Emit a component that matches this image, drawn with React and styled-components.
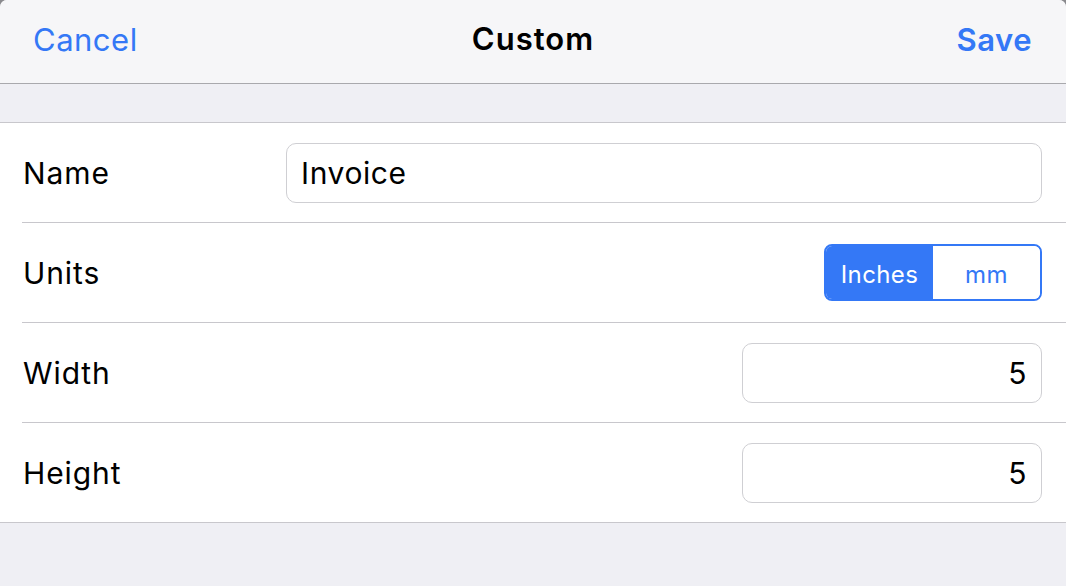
import * as React from 'react';
import styled, { createGlobalStyle } from 'styled-components';

const GlobalStyle = createGlobalStyle`
    html, body {
        margin: 0;
        padding: 0;
        background: #8a8a8e;
    }
    * { box-sizing: border-box; }
`

const Sheet = styled.div`
    width: 1066px;
    height: 586px;
    background: #efeff4;
    border-radius: 7px 7px 0 0;
    overflow: hidden;
    font-family: Inter, "Liberation Sans", sans-serif;
    display: flex;
    flex-direction: column;
`

const NavBar = styled.div`
    height: 84px;
    flex: none;
    background: #f6f6f8;
    border-bottom: 1px solid #a9a9ad;
    display: flex;
    align-items: center;
    justify-content: space-between;
    padding: 0 34px 5px 33px;
    position: relative;
`

const NavButton = styled.div`
    color: #3478f6;
    font-size: 31px;
    font-weight: ${p => p.bold ? 600 : 400};
    letter-spacing: 0.5px;
`

const Title = styled.div`
    position: absolute;
    left: 0;
    right: 0;
    text-align: center;
    font-size: 31px;
    font-weight: 600;
    letter-spacing: 1px;
    color: #000;
    pointer-events: none;
    padding-bottom: 1px;
`

const Spacer = styled.div`
    height: 38px;
    flex: none;
`

const Section = styled.div`
    background: #fff;
    border-top: 1px solid #c8c7cc;
`

const Row = styled.div`
    height: 100px;
    margin-left: ${p => p.last ? 0 : 22}px;
    padding-left: ${p => p.last ? 22 : 0}px;
    padding-right: 24px;
    display: flex;
    align-items: center;
    justify-content: space-between;
    border-bottom: 1px solid #c8c7cc;
`

const Label = styled.div`
    font-size: 30px;
    letter-spacing: 0.9px;
    color: #000;
    padding-left: 1px;
`

const Field = styled.div`
    width: ${p => p.width}px;
    height: 60px;
    border: 1px solid #cfcfd3;
    border-radius: 10px;
    display: flex;
    align-items: center;
    justify-content: ${p => p.right ? 'flex-end' : 'flex-start'};
    padding: 0 14px;
    font-size: 30px;
    letter-spacing: 0.6px;
    color: #000;
`

const Segmented = styled.div`
    display: flex;
    width: 218px;
    height: 57px;
    border: 2px solid #3478f6;
    border-radius: 8px;
    overflow: hidden;
`

const Segment = styled.div`
    flex: 1;
    display: flex;
    align-items: center;
    justify-content: center;
    padding-top: 3px;
    font-size: 24px;
    letter-spacing: 0.4px;
    background: ${p => p.active ? '#3478f6' : '#fff'};
    color: ${p => p.active ? '#fff' : '#3478f6'};
`

const App = () => {
    return (
        <Sheet>
            <GlobalStyle />
            <NavBar>
                <NavButton>Cancel</NavButton>
                <Title>Custom</Title>
                <NavButton bold>Save</NavButton>
            </NavBar>
            <Spacer />
            <Section>
                <Row>
                    <Label>Name</Label>
                    <Field width={756}>Invoice</Field>
                </Row>
                <Row>
                    <Label>Units</Label>
                    <Segmented>
                        <Segment active>Inches</Segment>
                        <Segment>mm</Segment>
                    </Segmented>
                </Row>
                <Row>
                    <Label>Width</Label>
                    <Field width={300} right>5</Field>
                </Row>
                <Row last>
                    <Label>Height</Label>
                    <Field width={300} right>5</Field>
                </Row>
            </Section>
        </Sheet>
    );
}

export default App;
